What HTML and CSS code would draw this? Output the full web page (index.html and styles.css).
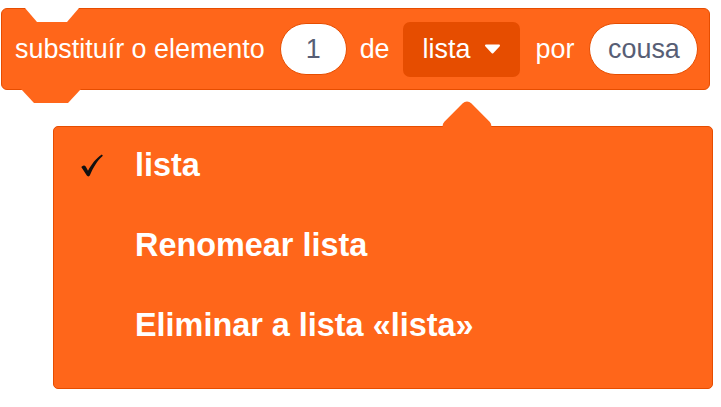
FILE: index.html
```html
<!DOCTYPE html>
<html lang="gl">
<head>
<meta charset="utf-8">
<title>substituír o elemento</title>
<link rel="stylesheet" href="styles.css">
</head>
<body>
<div class="block">
  <span class="label lbl-main">substituír o elemento</span>
  <span class="oval oval-num">1</span>
  <span class="label lbl-de">de</span>
  <span class="dropdown">
    <span class="dd-text">lista</span>
    <svg class="dd-arrow" width="17" height="10" viewBox="0 0 17 10"><path d="M2 1.5 H15 L8.5 8.5 Z" fill="#fff" stroke="#fff" stroke-width="2" stroke-linejoin="round"/></svg>
  </span>
  <span class="label lbl-por">por</span>
  <span class="oval oval-text">cousa</span>
</div>
<div class="menu">
  <div class="item">
    <span class="mark">
      <svg width="22" height="23" viewBox="0 0 22 23"><path d="M0.3 13 C2 11 3.8 11 5 13 L7 16.8 C11 9.5 15 4.5 20.8 0.6 L21.9 1.8 C16 7 12.5 13 8.8 21.6 C8.2 22.7 6.4 22.7 5.8 21.6 Z" fill="#111"/></svg>
    </span>
    <span>lista</span>
  </div>
  <div class="item"><span class="mark"></span><span>Renomear lista</span></div>
  <div class="item"><span class="mark"></span><span>Eliminar a lista «lista»</span></div>
</div>
</body>
</html>
```
FILE: styles.css
```css
html, body {
  margin: 0;
  padding: 0;
  background: #ffffff;
}
body {
  font-family: "Liberation Sans", Arial, Helvetica, sans-serif;
}
.block {
  position: relative;
  margin: 8px 0 0 1px;
  width: 709px;
  height: 82px;
  box-sizing: border-box;
  background: #FF661A;
  border: 1px solid #E64D00;
  border-radius: 6px;
  display: flex;
  align-items: center;
  padding-left: 13px;
  color: #ffffff;
  font-size: 26.9px;
}
.block::before {
  content: "";
  position: absolute;
  top: -1px;
  left: 23px;
  width: 54px;
  height: 14px;
  background: #ffffff;
  clip-path: polygon(0 0, 12px 100%, 42px 100%, 54px 0);
}
.block::after {
  content: "";
  position: absolute;
  top: 100%;
  left: 19px;
  width: 60px;
  height: 14px;
  background: #FF661A;
  clip-path: polygon(0 0, 100% 0, calc(100% - 13px) 100%, 13px 100%);
}
.label {
  white-space: nowrap;
}
.lbl-main { margin-right: 15px; }
.lbl-de { margin: 0 13px; }
.lbl-por { margin: 0 15px 0 16px; }
.oval {
  display: flex;
  align-items: center;
  justify-content: center;
  height: 52px;
  box-sizing: border-box;
  background: #ffffff;
  border: 1px solid #E64D00;
  border-radius: 26px;
  color: #575E75;
}
.oval-num { width: 67px; }
.oval-text { width: 109px; }
.dropdown {
  display: flex;
  align-items: center;
  height: 55px;
  width: 117px;
  box-sizing: border-box;
  padding-left: 20px;
  background: #E64D00;
  border-radius: 7px;
}
.dd-arrow {
  margin-left: 14px;
}
.menu {
  position: relative;
  margin: 36px 0 0 53px;
  width: 660px;
  height: 263px;
  box-sizing: border-box;
  background: #FF661A;
  border: 1px solid #E64D00;
  border-radius: 5px;
  color: #ffffff;
  font-weight: bold;
  font-size: 32.4px;
}
.menu::before {
  content: "";
  position: absolute;
  left: 394px;
  top: -20px;
  width: 38px;
  height: 38px;
  background: #FF661A;
  border-radius: 6px;
  transform: rotate(45deg);
}
.menu::after {
  content: "";
  position: absolute;
  left: 639px;
  top: 262px;
  width: 12px;
  height: 8px;
  background: #B5B5C2;
  clip-path: polygon(0 0, 100% 0, 100% 4px, 3px 4px, 3px 100%, 0 100%);
}
.item {
  display: flex;
  align-items: center;
  height: 80px;
  white-space: nowrap;
}
.item:first-child {
  margin-top: -2px;
}
.mark {
  display: flex;
  align-items: center;
  width: 81px;
  padding-left: 27px;
  box-sizing: border-box;
}
```
